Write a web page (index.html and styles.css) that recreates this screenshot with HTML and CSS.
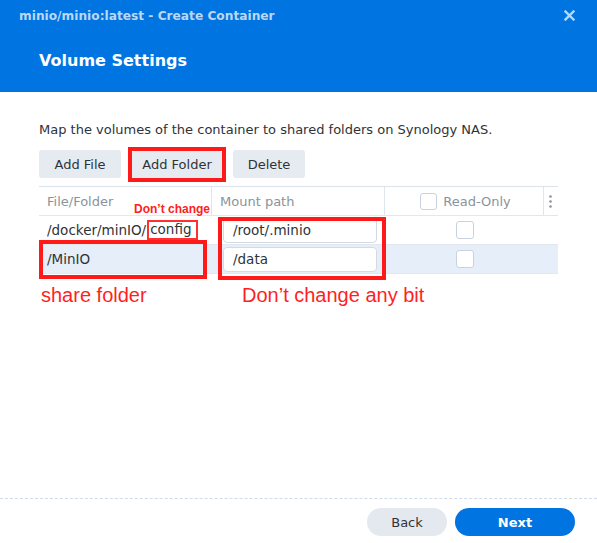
FILE: index.html
```html
<!DOCTYPE html>
<html lang="en">
<head>
<meta charset="utf-8">
<title>Create Container</title>
<link rel="stylesheet" href="styles.css">
</head>
<body>
<div class="dialog">
  <header class="header">
    <div class="titlebar">
      <span class="title">minio/minio:latest - Create Container</span>
      <svg class="close" width="11" height="11" viewBox="0 0 11 11"><path d="M1.5 1.5 L9.5 9.5 M9.5 1.5 L1.5 9.5" stroke="currentColor" stroke-width="2.4" stroke-linecap="square"/></svg>
    </div>
    <h1 class="heading">Volume Settings</h1>
  </header>

  <main class="content">
    <p class="desc">Map the volumes of the container to shared folders on Synology NAS.</p>
    <div class="toolbar">
      <button class="btn btn-file">Add File</button>
      <span class="marked"><button class="btn btn-folder">Add Folder</button></span>
      <button class="btn btn-delete">Delete</button>
    </div>

    <div class="grid">
      <div class="row head">
        <div class="cell">File/Folder</div>
        <div class="cell">Mount path</div>
        <div class="cell center ro"><span class="check"></span><span>Read-Only</span></div>
        <div class="cell more">
          <svg width="3" height="13" viewBox="0 0 3 13"><circle cx="1.5" cy="1.5" r="1.3" fill="#8a939c"/><circle cx="1.5" cy="6.5" r="1.3" fill="#8a939c"/><circle cx="1.5" cy="11.5" r="1.3" fill="#8a939c"/></svg>
        </div>
      </div>
      <div class="row">
        <div class="cell body">/docker/minIO/<span class="boxed">config</span></div>
        <div class="cell body"><div class="input">/root/.minio</div></div>
        <div class="cell center"><span class="check big"></span></div>
        <div class="cell"></div>
      </div>
      <div class="row selected">
        <div class="cell body share">/MinIO</div>
        <div class="cell body"><div class="input">/data</div></div>
        <div class="cell center"><span class="check big"></span></div>
        <div class="cell"></div>
      </div>
      <div class="note-small">Don’t change</div>
      <div class="mount-box"></div>
    </div>

    <div class="notes">
      <span class="note">share folder</span>
      <span class="note">Don’t change any bit</span>
    </div>
  </main>

  <footer class="footer">
    <button class="pill back">Back</button>
    <button class="pill next">Next</button>
  </footer>
</div>
</body>
</html>
```

FILE: styles.css
```css
html, body {
  margin: 0;
  padding: 0;
  background: #ffffff;
}

.dialog {
  width: 597px;
  height: 543px;
  display: flex;
  flex-direction: column;
  font-family: "DejaVu Sans", Verdana, sans-serif;
  color: #2f3338;
  overflow: hidden;
}

.header {
  background: #0074e0;
  height: 92px;
  box-sizing: border-box;
  padding: 0 20px 0 19px;
}

.titlebar {
  display: flex;
  justify-content: space-between;
  align-items: center;
  height: 31px;
}

.title {
  font-size: 12.2px;
  font-weight: bold;
  color: #b9d8f6;
}

.close {
  color: #b9d8f6;
  margin-right: 2px;
}

.heading {
  margin: 19px 0 0 20px;
  font-size: 16px;
  line-height: 22px;
  font-weight: bold;
  color: #ffffff;
}

.content {
  flex: 1;
  padding: 0 39px;
}

.desc {
  margin: 29px 0 0 0;
  font-size: 13px;
  line-height: 17px;
  color: #2f3338;
}

.toolbar {
  display: flex;
  align-items: center;
  gap: 11px;
  margin-top: 12px;
}

.btn {
  height: 28px;
  border: none;
  border-radius: 3px;
  background: #e6ebf1;
  color: #2f3338;
  font-family: "DejaVu Sans", Verdana, sans-serif;
  font-size: 13px;
  padding: 0;
  display: block;
}

.btn-file { width: 82px; }
.btn-folder { width: 90px; height: 27px; }
.btn-delete { width: 72px; }

.marked {
  border: 4px solid #ff1a1a;
  margin: -4px -4px;
  display: block;
}

.grid {
  position: relative;
  margin-top: 8px;
  width: 519px;
  border-top: 1px solid #dde3ea;
  font-size: 13px;
}

.row {
  display: grid;
  grid-template-columns: 172px 173px 159px 15px;
  height: 29px;
  border-bottom: 1px solid #e2e7ed;
  box-sizing: border-box;
}

.row.head {
  color: #8a939c;
}

.row.head .cell + .cell {
  border-left: 1px solid #dfe5eb;
}

.row.selected {
  background: #e5eef9;
}

.cell {
  display: flex;
  align-items: center;
  padding-left: 8px;
  white-space: nowrap;
  position: relative;
}

.cell.body {
  font-size: 13.5px;
}

.cell.center {
  justify-content: center;
  padding-left: 0;
  gap: 6px;
}

.cell.ro {
  padding-left: 3px;
}

.cell.more {
  padding-left: 5px;
}

.check {
  width: 15px;
  height: 15px;
  border: 1px solid #c9d3de;
  border-radius: 3px;
  background: #fff;
  display: inline-block;
}

.check.big {
  width: 16px;
  height: 16px;
  margin-left: 2px;
}

.boxed {
  border: 2px solid #ff3030;
  padding: 0 5px 1px 1px;
  margin-left: 1px;
  line-height: 15px;
}

.input {
  margin-left: 4px;
  width: 154px;
  height: 25px;
  box-sizing: border-box;
  border: 1px solid #d3dae3;
  border-radius: 4px;
  background: #fff;
  display: flex;
  align-items: center;
  padding-left: 9px;
  color: #2f3338;
}

.share::after {
  content: "";
  position: absolute;
  left: 0;
  top: -5px;
  width: 168px;
  height: 39px;
  border: 4px solid #ff1a1a;
  box-sizing: border-box;
}

.note-small {
  position: absolute;
  left: 95px;
  top: 16px;
  font-family: "Liberation Sans", Arial, sans-serif;
  font-weight: bold;
  font-size: 12px;
  line-height: 12px;
  color: #ff2020;
}

.mount-box {
  position: absolute;
  left: 179px;
  top: 30px;
  width: 168px;
  height: 63px;
  border: 4px solid #ff1a1a;
  box-sizing: border-box;
}

.notes {
  display: grid;
  grid-template-columns: 201px auto;
  margin-top: 10px;
}

.note {
  font-family: "Liberation Sans", Arial, sans-serif;
  font-size: 20px;
  line-height: 23px;
  color: #ff1f1f;
  padding-left: 2px;
}

.footer {
  border-top: 1px dashed #cfdbe8;
  display: flex;
  justify-content: flex-end;
  gap: 8px;
  padding: 9px 22px 7px 0;
}

.pill {
  height: 28px;
  border: none;
  border-radius: 14px;
  font-family: "DejaVu Sans", Verdana, sans-serif;
  font-size: 13px;
  padding: 0;
}

.back {
  width: 80px;
  background: #e4e9f0;
  color: #2f3338;
}

.next {
  width: 120px;
  background: #0074e0;
  color: #ffffff;
  font-weight: bold;
}
```
